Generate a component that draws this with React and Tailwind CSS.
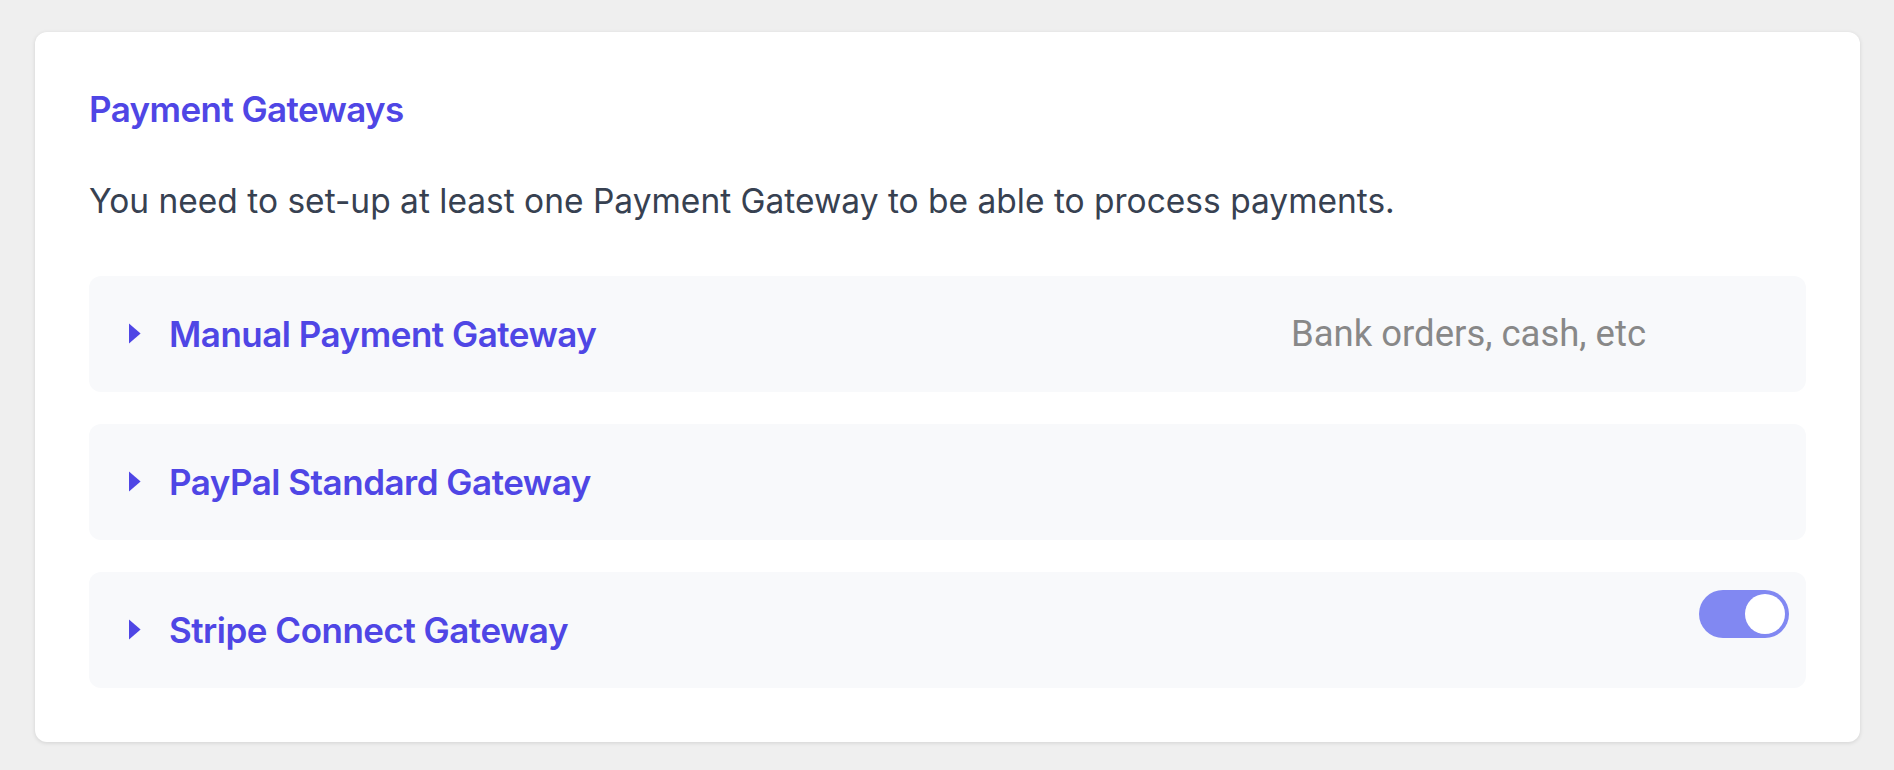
import React from "react";

function Caret() {
  return (
    <svg width="12" height="21" viewBox="0 0 12 21" className="shrink-0">
      <path d="M0 0.5 L11.6 10.5 L0 20.5 Z" fill="#4f46e5" />
    </svg>
  );
}

function Toggle() {
  return (
    <div className="w-[90px] h-[48px] rounded-full bg-[#8188f2] flex items-center justify-end pr-[4px]">
      <div className="w-[40px] h-[40px] rounded-full bg-white" />
    </div>
  );
}

function GatewayRow({ title, hint, toggle }) {
  return (
    <div className="h-[116px] rounded-xl bg-[#f8f9fb] flex pl-[40px] pr-[17px]">
      <div className="flex items-center gap-[28px] flex-1">
        <Caret />
        <span className="text-[35px] font-semibold text-[#4f46e5] tracking-[-0.5px]">{title}</span>
      </div>
      {hint && (
        <div className="flex items-center pr-[143px] text-[36.5px] text-[#888888] font-['Roboto',sans-serif]">
          {hint}
        </div>
      )}
      {toggle && (
        <div className="self-start mt-[18px]">
          <Toggle />
        </div>
      )}
    </div>
  );
}

export default function App() {
  return (
    <div className="min-h-[770px] bg-[#efefef] pt-[32px] pl-[35px] pr-[34px] font-['Inter',sans-serif]">
      <div className="bg-white rounded-xl shadow-[0_1px_4px_rgba(0,0,0,0.12)] px-[54px] pt-[56px] pb-[54px]">
        <h2 className="text-[35px] leading-[1.21] font-semibold text-[#4f46e5] tracking-[-0.6px]">Payment Gateways</h2>
        <p className="mt-[51px] text-[33.5px] leading-[1.21] text-[#374151]">
          You need to set-up at least one Payment Gateway to be able to process payments.
        </p>
        <div className="mt-[54px] flex flex-col gap-[32px]">
          <GatewayRow title="Manual Payment Gateway" hint="Bank orders, cash, etc" />
          <GatewayRow title="PayPal Standard Gateway" />
          <GatewayRow title="Stripe Connect Gateway" toggle />
        </div>
      </div>
    </div>
  );
}
